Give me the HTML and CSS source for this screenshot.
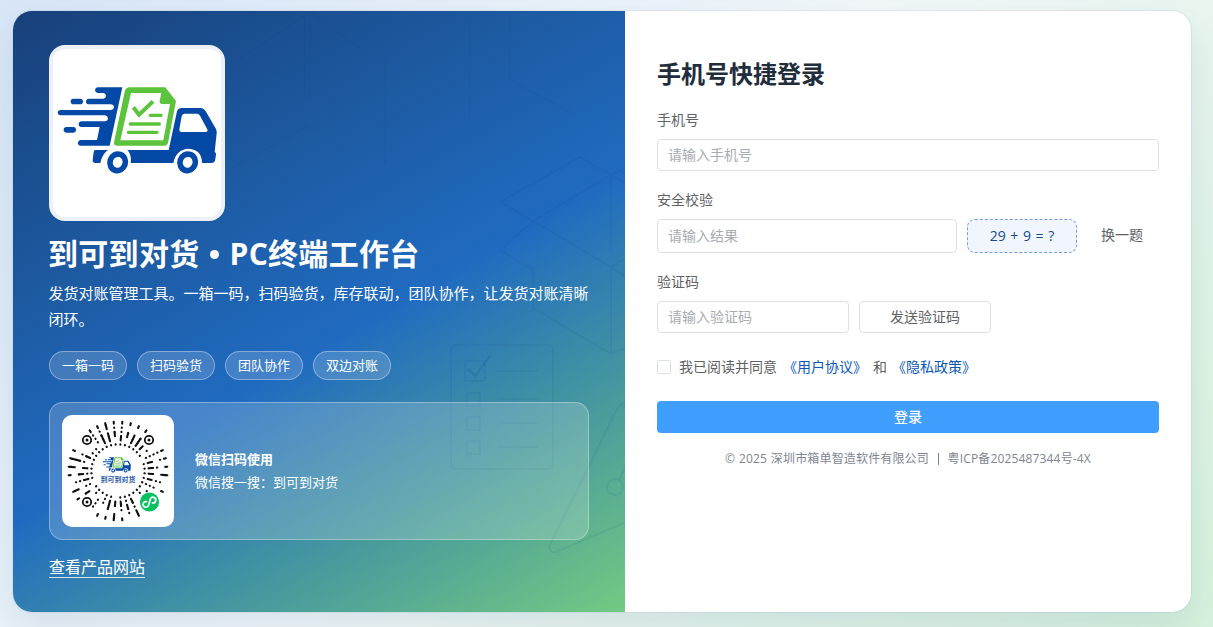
FILE: index.html
```html
<!DOCTYPE html>
<html lang="zh-CN">
<head>
  <meta charset="UTF-8">
  <meta name="viewport" content="width=device-width, initial-scale=1.0">
  <title>到可到对货 · PC终端工作台</title>
  <link rel="stylesheet" href="styles.css">
</head>
<body>
  <main class="login-card">
    <section class="brand">
      <!-- faint line art behind the brand content -->
      <svg class="brand-art" viewBox="13 11 612 601" aria-hidden="true">
        <g class="faint">
          <path d="M305 12V100M310 12V100M385 60V165M470 12V120M237 60L310 12L360 48M237 165L310 125M510 12V80L575 115"/>
        </g>
        <path d="M500 202L580 157L626 184M626 168L611 175L533 221L500 250L533 270V308L611 354L626 348M500 202L533 221L611 267L626 277M611 175V250M611 267V354M611 267L626 258"/>
        <path d="M626 402Q619 405 615 413L550 545Q548 553 556 552L626 522M619 480L626 467"/>
        <circle cx="615" cy="487" r="8"/>
        <rect x="451" y="345" width="102" height="124" rx="5"/>
        <path d="M497 371H539M497 399H539M497 423H539M497 447H539"/>
        <path d="M465 361H485V381H465ZM467 393H480V406H467ZM467 417H480V430H467ZM467 441H480V454H467Z"/>
        <path class="tick" d="M468 369L475 376L490 356"/>
      </svg>

      <div class="logo">
        <svg viewBox="39 39 504 504" role="img" aria-label="到可到对货">
          <g id="truck">
            <path fill="#0449a6" d="M173 154H247L209 329H122Q113 328 114 320Q115 312 123 312H171L179 273H124Q115 272 116 264Q117 256 125 256H195Q204 255 204 247Q203 239 195 238H61Q53 237 53 230Q54 222 62 222H213Q222 220 222 213Q221 206 213 205H145Q137 204 138 196Q139 188 147 188H190Q198 186 198 179Q197 172 190 171H173Q165 169 165 162Q166 155 173 154Z"/>
            <rect x="92" y="188" width="37" height="17" rx="8.500" fill="#0449a6"/>
            <rect x="71" y="273" width="37" height="17" rx="8.500" fill="#0449a6"/>
            <path fill="#0449a6" d="M166 342H204Q187 353 181 381H166Q157 380 158 372L161 348Q162 342 166 342ZM262 342H386L411 226Q414 216 426 216H481Q492 217 498 227L528 279Q531 285 530 292L524 348Q529 350 528 356L525 374Q523 380 516 381H486Q486 341 446 338Q408 340 400 381H272Q276 355 262 342Z"/>
            <path fill="#fff" d="M433 233H471Q477 233 480 239L503 282Q503 288 497 288H423Q417 287 418 280L425 241Q427 233 433 233Z"/>
            <ellipse cx="233" cy="379" rx="23" ry="25" transform="rotate(18 233 379)" fill="#fff" stroke="#0449a6" stroke-width="17"/>
            <ellipse cx="443" cy="379" rx="23" ry="25" transform="rotate(18 443 379)" fill="#fff" stroke="#0449a6" stroke-width="17"/>
            <path fill="#5bc33c" fill-rule="evenodd" d="M267 154H376L408 195L384 321Q382 329 374 329H229Q221 328 222 319L255 163Q258 155 267 154ZM273 171L241 313H370L390 204H366Q358 203 359 194L364 171Z"/>
            <path fill="none" stroke="#5bc33c" stroke-width="12" d="M280 214L297 236L339 196"/>
            <path fill="none" stroke="#5bc33c" stroke-width="10" stroke-linecap="round" d="M331 238H363M271 264H358M265 289H351"/>
          </g>
        </svg>
      </div>

      <h1>到可到对货<span class="dot"></span>PC终端工作台</h1>
      <p class="intro">发货对账管理工具。一箱一码，扫码验货，库存联动，团队协作，让发货对账清晰闭环。</p>

      <div class="tags">
        <span>一箱一码</span>
        <span>扫码验货</span>
        <span>团队协作</span>
        <span>双边对账</span>
      </div>

      <div class="qr-panel">
        <div class="qr-box">
          <svg viewBox="-56 -56 112 112" role="img" aria-label="小程序码">
            <g id="qr-rays"></g>
            <g class="finder">
              <circle cx="-31" cy="-31" r="4.200"/>
              <circle cx="31" cy="-31" r="4.200"/>
              <circle cx="-31" cy="31" r="4.200"/>
            </g>
            <g class="finder-core">
              <circle cx="-31" cy="-31" r="1.500"/>
              <circle cx="31" cy="-31" r="1.500"/>
              <circle cx="-31" cy="31" r="1.500"/>
            </g>
            <use href="#truck" transform="translate(-18.700 -23) scale(.0595)"/>
            <text x="0" y="11" class="qr-name">到可到对货</text>
            <circle cx="31.500" cy="31" r="9.600" fill="#07c160"/>
            <path d="M28.500 31.500A2.800 2.800 0 1 0 31.500 34.200V28.200A2.800 2.800 0 1 1 34.500 31" transform="rotate(16 31.500 31)" fill="none" stroke="#fff" stroke-width="1.700" stroke-linecap="round"/>
          </svg>
        </div>
        <div class="qr-text">
          <strong>微信扫码使用</strong>
          <span>微信搜一搜：到可到对货</span>
        </div>
      </div>

      <a class="site-link" href="#">查看产品网站</a>
    </section>

    <section class="login">
      <h2>手机号快捷登录</h2>
      <form id="login-form">
        <label for="phone">手机号</label>
        <input type="tel" id="phone" class="phone" placeholder="请输入手机号">

        <label for="answer">安全校验</label>
        <div class="row">
          <input type="text" id="answer" class="answer" placeholder="请输入结果">
          <span class="question">29 + 9 = ?</span>
          <button type="button" class="text-btn">换一题</button>
        </div>

        <label for="code">验证码</label>
        <div class="row">
          <input type="text" id="code" class="code" placeholder="请输入验证码">
          <button type="button" class="send-btn">发送验证码</button>
        </div>

        <div class="agree">
          <input type="checkbox" id="agree">
          <label for="agree">我已阅读并同意</label>
          <a href="#">《用户协议》</a>
          <span>和</span>
          <a href="#">《隐私政策》</a>
        </div>

        <button type="submit" class="submit-btn">登录</button>
      </form>
      <footer>© 2025 深圳市箱单智造软件有限公司 <i></i> 粤ICP备2025487344号-4X</footer>
    </section>
  </main>
  <script src="script.js"></script>
</body>
</html>
```
FILE: styles.css
```css
* {
  box-sizing: border-box;
}
body {
  margin: 0;
  height: 627px;
  padding: 10px 21px 0 12px;
  overflow: hidden;
  font-family: "Open Sans", "Noto Sans CJK SC", sans-serif;
  font-size: 14px;
  color: #606266;
  background: linear-gradient(135deg, #d9e7f8 0%, #f3f8fa 48%, #d8f3dc 100%);
}
h1, h2, p {
  margin: 0;
}
.login-card {
  display: grid;
  grid-template-columns: 612px 1fr;
  height: 603px;
  border: 1px solid rgba(30, 90, 170, 0.07);
  border-radius: 20px;
  overflow: hidden;
  background: #fff;
  background-clip: padding-box;
  box-shadow: 0 16px 40px rgba(20, 70, 120, 0.12);
}

/* left side */
.brand {
  position: relative;
  display: flex;
  flex-direction: column;
  align-items: flex-start;
  padding: 34px 36px 0;
  color: #fff;
  background: linear-gradient(150deg, #184079 0%, #1d5ba3 32%, #206bc0 54%, #4a9c9c 78%, #73ca82 100%);
}
.brand > * {
  position: relative;
}
.brand .brand-art {
  position: absolute;
  inset: 0;
  width: 100%;
  height: 100%;
  fill: none;
  stroke: rgba(15, 70, 125, 0.08);
  stroke-width: 2;
}
.brand-art .faint {
  stroke: rgba(15, 60, 125, 0.05);
}
.brand-art .tick {
  stroke: rgba(15, 70, 125, 0.2);
}
.logo {
  width: 176px;
  height: 176px;
  border: 4px solid #edf0f7;
  border-radius: 16px;
  overflow: hidden;
  background: #fff;
}
.logo svg, .qr-box svg {
  display: block;
  width: 100%;
  height: 100%;
}
h1 {
  margin: 14px 0 0 -1px;
  font-size: 30px;
  line-height: 38px;
  font-weight: 700;
  letter-spacing: 0.3px;
  white-space: nowrap;
}
h1 .dot {
  display: inline-block;
  width: 9px;
  height: 9px;
  margin: 0 11px 0 10px;
  border-radius: 50%;
  background: #fff;
  vertical-align: 6px;
}
.intro {
  margin: 7px 0 0 -0.5px;
  font-size: 15px;
  line-height: 26px;
}
.tags {
  display: flex;
  gap: 10px;
  margin-top: 19px;
}
.tags span {
  width: 78px;
  height: 29px;
  border: 1px solid rgba(255, 255, 255, 0.35);
  border-radius: 15px;
  background: rgba(255, 255, 255, 0.16);
  font-size: 13px;
  line-height: 27px;
  text-align: center;
}
.qr-panel {
  display: flex;
  align-items: center;
  gap: 21px;
  width: 540px;
  height: 138px;
  margin-top: 22px;
  padding: 0 12px;
  border: 1px solid rgba(255, 255, 255, 0.32);
  border-radius: 14px;
  background: rgba(255, 255, 255, 0.18);
}
.qr-box {
  width: 112px;
  height: 112px;
  border-radius: 10px;
  background: #fff;
}
.qr-box line {
  stroke: #111;
  stroke-width: 2.1;
  stroke-linecap: round;
}
.finder {
  fill: #fff;
  stroke: #111;
  stroke-width: 1.8;
}
.finder-core {
  fill: #111;
}
.qr-name {
  font-size: 7px;
  font-weight: 700;
  fill: #1f5aa8;
  text-anchor: middle;
}
.qr-text {
  display: flex;
  flex-direction: column;
  font-size: 13px;
  line-height: 23px;
}
.site-link {
  margin-top: 17px;
  border-bottom: 1px solid rgba(255, 255, 255, 0.8);
  font-size: 16px;
  line-height: 20px;
  color: #fff;
  text-decoration: none;
}

/* right side */
.login {
  padding: 45px 32px 0;
}
h2 {
  font-size: 24px;
  line-height: 36px;
  color: #1f2d3d;
}
form label {
  display: block;
  line-height: 22px;
}
#login-form > label {
  margin: 18px 0 8px;
}
#login-form > label:first-child {
  margin-top: 17px;
}
input, button {
  height: 32px;
  border: 1px solid #dcdfe6;
  border-radius: 4px;
  background: #fff;
  font: inherit;
  color: #606266;
}
input {
  display: block;
  padding: 0 10px 2px;
}
button {
  padding: 0 0 2px;
}
input::placeholder {
  color: #a8abb2;
}
.phone {
  width: 100%;
}
.row {
  display: flex;
  align-items: center;
  gap: 10px;
}
.answer {
  width: 300px;
  height: 34px;
}
.question {
  width: 110px;
  height: 34px;
  border: 1px dashed #7b9fdb;
  border-radius: 8px;
  background: #f1f6fe;
  color: #164a8c;
  font-weight: 500;
  line-height: 32px;
  text-align: center;
  word-spacing: 1px;
}
.text-btn {
  padding: 0 14px 4px;
  border: none;
}
.code {
  width: 192px;
}
.send-btn {
  width: 132px;
}
.agree {
  display: flex;
  align-items: center;
  height: 22px;
  margin: 23px 0;
}
.agree input {
  appearance: none;
  width: 14px;
  height: 14px;
  margin: 0 8px 0 0;
  padding: 0;
  border-radius: 2px;
}
.agree label, .agree a, .agree span {
  line-height: 20px;
  padding-bottom: 1px;
}
.agree a {
  color: #0b57b5;
  text-decoration: none;
}
.agree label {
  margin-right: 6px;
}
.agree span {
  margin: 0 5px 0 6px;
}
.submit-btn {
  display: block;
  width: 100%;
  border: none;
  background: #409eff;
  color: #fff;
  font-weight: 500;
}
footer {
  margin-top: 16px;
  font-size: 12px;
  line-height: 20px;
  letter-spacing: 0.16px;
  color: #7d8592;
  text-align: center;
  word-spacing: 0.5px;
}
footer i {
  display: inline-block;
  width: 1px;
  height: 12px;
  margin: 0 5px;
  background: #7d8592;
  vertical-align: -2px;
}
```
FILE: script.js
```js
// one entry per ray, clockwise from the top; 1 = dot, 2 = dash joined to the next step
const rays = [
  "121111", "102101", "122001", "122101", "120000", "101000",
  "011111", "121011", "121101", "121021", "120110", "111101",
  "101000", "110000", "100000", "121121", "112110", "121101",
  "021021", "122101", "111001", "101110", "110000", "102101",
  "011021", "121110", "112101", "121021", "101221", "121101",
  "110000", "110000", "101111", "122111", "122021", "102111"
];
const group = document.getElementById("qr-rays");
rays.forEach((ray, i) => {
  for (let n = 0; n < 6; n++) {
    if (ray[n] === "0") continue;
    const r = 26.5 + n * 4.2;
    const len = ray[n] === "2" && n < 5 ? 4.2 : n === 5 ? 2 : 0.3;
    const line = document.createElementNS("http://www.w3.org/2000/svg", "line");
    line.setAttribute("y1", -r);
    line.setAttribute("y2", -r - len);
    line.setAttribute("transform", `rotate(${5 + i * 10})`);
    group.appendChild(line);
  }
});

document.getElementById("login-form").addEventListener("submit", (e) => {
  e.preventDefault();
});
```
